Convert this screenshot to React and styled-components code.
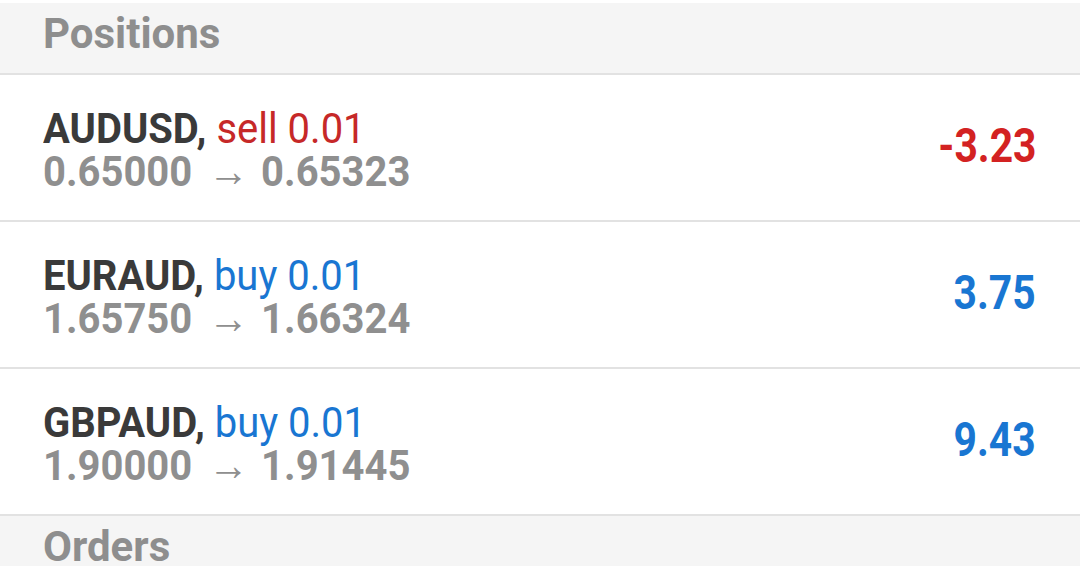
import React from 'react';
import styled, { createGlobalStyle } from 'styled-components';

const GlobalStyle = createGlobalStyle`
  html, body {
    margin: 0;
    padding: 0;
    background: #ffffff;
    font-family: Roboto, "Liberation Sans", sans-serif;
  }
`;

const Page = styled.div`
  width: 1080px;
  height: 566px;
  overflow: hidden;
  background: #fff;
  padding-top: 3px;
  box-sizing: border-box;
`;

const SectionHeader = styled.div`
  height: 70px;
  background: #f5f5f5;
  border-bottom: 2px solid #e2e2e2;
  padding-left: 43px;
  box-sizing: content-box;
  font-size: 42px;
  font-weight: 700;
  color: #8e8e8e;
  line-height: 62px;
`;

const Row = styled.div`
  height: 145px;
  border-bottom: 2px solid #e2e2e2;
  display: flex;
  justify-content: space-between;
  align-items: center;
  padding: 0 44px 0 43px;
`;

const Info = styled.div`
  display: flex;
  flex-direction: column;
  padding-top: 5px;
`;

const Condensed = styled.span`
  display: inline-block;
  white-space: nowrap;
  transform: scaleX(${p => p.$scale || 0.93});
  transform-origin: ${p => (p.$right ? 'right' : 'left')} center;
`;

const Line = styled.div`
  font-size: 43px;
  line-height: 43px;
  height: 43px;
  white-space: nowrap;
`;

const Symbol = styled.span`
  display: inline-block;
  font-weight: 700;
  color: #3a3a3a;
`;

const Side = styled.span`
  display: inline-block;
  font-weight: 400;
  color: ${p => (p.$sell ? '#c62828' : '#1976d2')};
`;

const Prices = styled.span`
  display: inline-block;
  font-weight: 700;
  color: #8f8f8f;
`;

const Arrow = styled.span`
  display: inline-block;
  font-weight: 400;
  font-size: 44px;
  margin: 0 13px 0 17px;
`;

const Profit = styled.div`
  font-size: 48px;
  line-height: 52px;
  font-weight: 700;
  color: ${p => (p.$neg ? '#d32222' : '#1976d2')};
  padding-bottom: 4px;
`;

const positions = [
  { symbol: 'AUDUSD', side: 'sell', lot: '0.01', open: '0.65000', cur: '0.65323', profit: '-3.23' },
  { symbol: 'EURAUD', side: 'buy', lot: '0.01', open: '1.65750', cur: '1.66324', profit: '3.75' },
  { symbol: 'GBPAUD', side: 'buy', lot: '0.01', open: '1.90000', cur: '1.91445', profit: '9.43' },
];

export default function App() {
  return (
    <Page>
      <GlobalStyle />
      <SectionHeader>Positions</SectionHeader>
      {positions.map(p => (
        <Row key={p.symbol}>
          <Info>
            <Line>
              <Condensed>
                <Symbol>{p.symbol},</Symbol> <Side $sell={p.side === 'sell'}>{p.side} {p.lot}</Side>
              </Condensed>
            </Line>
            <Line>
              <Condensed>
                <Prices>
                  {p.open}
                  <Arrow>→</Arrow>
                  {p.cur}
                </Prices>
              </Condensed>
            </Line>
          </Info>
          <Profit $neg={p.profit.startsWith('-')}>
            <Condensed $right $scale={0.85}>{p.profit}</Condensed>
          </Profit>
        </Row>
      ))}
      <SectionHeader>Orders</SectionHeader>
    </Page>
  );
}
